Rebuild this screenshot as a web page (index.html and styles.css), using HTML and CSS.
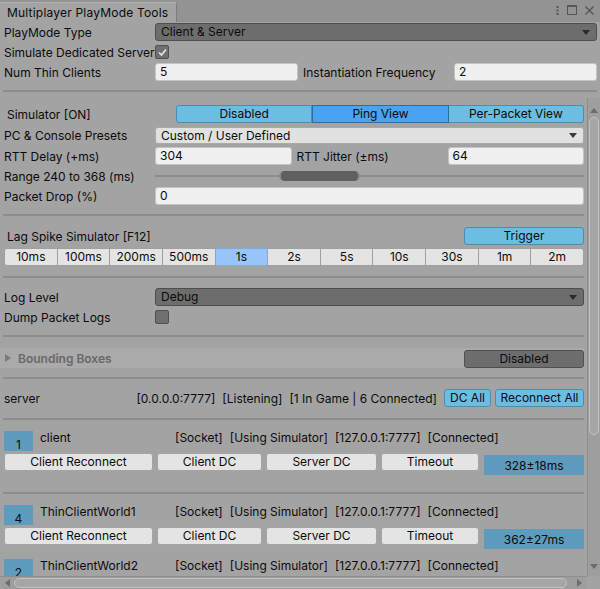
FILE: index.html
```html
<!DOCTYPE html>
<html>
<head>
<meta charset="utf-8">
<link rel="stylesheet" href="styles.css">
</head>
<body>
<div class="window">
  <div class="tabbar">
    <div class="tab">Multiplayer PlayMode Tools</div>
    <div class="tabicons">
      <svg width="3" height="9" viewBox="0 0 3 9"><rect x="0.5" y="0" width="2" height="2" fill="#555"/><rect x="0.5" y="3.5" width="2" height="2" fill="#555"/><rect x="0.5" y="7" width="2" height="2" fill="#555"/></svg>
      <svg width="10" height="10" viewBox="0 0 10 10"><rect x="0.5" y="0.5" width="9" height="9" fill="none" stroke="#555"/><rect x="0" y="0" width="10" height="2" fill="#555"/></svg>
      <svg width="9" height="9" viewBox="0 0 9 9"><path d="M0.5 0.5 L8.5 8.5 M8.5 0.5 L0.5 8.5" stroke="#555" stroke-width="1.3"/></svg>
    </div>
  </div>

  <div class="top">
    <div class="row">
      <div class="label">PlayMode Type</div>
      <div class="dropdown dark">Client &amp; Server<span class="arrow"></span></div>
    </div>
    <div class="row">
      <div class="label">Simulate Dedicated Server</div>
      <div class="checkbox"><svg width="11" height="11" viewBox="0 0 11 11"><path d="M2 5.5 L4.5 8 L9 2.5" fill="none" stroke="#e8e8e8" stroke-width="1.6"/></svg></div>
    </div>
    <div class="row">
      <div class="label">Num Thin Clients</div>
      <div class="field">5</div>
      <div class="label second">Instantiation Frequency</div>
      <div class="field">2</div>
    </div>
  </div>
  <div class="sep wide"></div>

  <div class="scrollview">
    <div class="content">
      <div class="row">
        <div class="label sim">Simulator [ON]</div>
        <div class="toolbar">
          <div class="tb">Disabled</div>
          <div class="tb on">Ping View</div>
          <div class="tb">Per-Packet View</div>
        </div>
      </div>
      <div class="row r3">
        <div class="label">PC &amp; Console Presets</div>
        <div class="dropdown light">Custom / User Defined<span class="arrow"></span></div>
      </div>
      <div class="row r3">
        <div class="label">RTT Delay (+ms)</div>
        <div class="field">304</div>
        <div class="label second">RTT Jitter (±ms)</div>
        <div class="field">64</div>
      </div>
      <div class="row r2">
        <div class="label">Range 240 to 368 (ms)</div>
        <div class="slider">
          <div class="track"></div>
          <div class="range" style="left:124px;width:81px"></div>
        </div>
      </div>
      <div class="row r2">
        <div class="label">Packet Drop (%)</div>
        <div class="field">0</div>
      </div>
      <div class="sep s1"></div>

      <div class="row lag">
        <div class="label sim">Lag Spike Simulator [F12]</div>
        <div class="btn blue trigger">Trigger</div>
      </div>
      <div class="segs">
        <div class="seg">10ms</div>
        <div class="seg">100ms</div>
        <div class="seg">200ms</div>
        <div class="seg">500ms</div>
        <div class="seg sel">1s</div>
        <div class="seg">2s</div>
        <div class="seg">5s</div>
        <div class="seg">10s</div>
        <div class="seg">30s</div>
        <div class="seg">1m</div>
        <div class="seg">2m</div>
      </div>
      <div class="sep s2"></div>

      <div class="row loglevel">
        <div class="label">Log Level</div>
        <div class="dropdown dark">Debug<span class="arrow"></span></div>
      </div>
      <div class="row r2">
        <div class="label">Dump Packet Logs</div>
        <div class="checkbox"></div>
      </div>
      <div class="sep s3"></div>

      <div class="foldout">
        <span class="tri"></span>
        <span class="fold-title">Bounding Boxes</span>
        <div class="btn darkbtn">Disabled</div>
      </div>
      <div class="sep s4"></div>

      <div class="row server">
        <div class="srv-name">server</div>
        <div class="srv-info">
          <span>[0.0.0.0:7777]</span>
          <span>[Listening]</span>
          <span>[1 In Game | 6 Connected]</span>
        </div>
        <div class="btn blue dcall">DC All</div>
        <div class="btn blue reall">Reconnect All</div>
      </div>
      <div class="sep s5"></div>

      <div class="client c1">
        <div class="chead">
          <div class="idx">1</div>
          <div class="cname">client</div>
          <div class="cinfo"><span>[Socket]</span><span>[Using Simulator]</span><span>[127.0.0.1:7777]</span><span>[Connected]</span></div>
        </div>
        <div class="cbtns">
          <div class="btn cb1">Client Reconnect</div>
          <div class="btn cb2">Client DC</div>
          <div class="btn cb3">Server DC</div>
          <div class="btn cb4">Timeout</div>
          <div class="ping">328±18ms</div>
        </div>
      </div>
      <div class="sep s6"></div>

      <div class="client c2">
        <div class="chead">
          <div class="idx">4</div>
          <div class="cname">ThinClientWorld1</div>
          <div class="cinfo"><span>[Socket]</span><span>[Using Simulator]</span><span>[127.0.0.1:7777]</span><span>[Connected]</span></div>
        </div>
        <div class="cbtns">
          <div class="btn cb1">Client Reconnect</div>
          <div class="btn cb2">Client DC</div>
          <div class="btn cb3">Server DC</div>
          <div class="btn cb4">Timeout</div>
          <div class="ping">362±27ms</div>
        </div>
      </div>

      <div class="client c3">
        <div class="chead">
          <div class="idx">2</div>
          <div class="cname">ThinClientWorld2</div>
          <div class="cinfo"><span>[Socket]</span><span>[Using Simulator]</span><span>[127.0.0.1:7777]</span><span>[Connected]</span></div>
        </div>
      </div>
    </div>

    <div class="vscroll">
      <div class="varrow up"></div>
      <div class="vthumb"></div>
      <div class="varrow down"></div>
    </div>
    <div class="hscroll">
      <div class="harrow left"></div>
      <div class="hthumb"></div>
      <div class="harrow right"></div>
    </div>
    <div class="corner"></div>
  </div>
</div>
</body>
</html>
```
FILE: styles.css
```css
* { box-sizing: border-box; }
html, body { margin: 0; padding: 0; }
body {
  width: 600px;
  height: 589px;
  overflow: hidden;
  background: #a3a3a3;
  font-family: Inter, "Noto Sans", sans-serif;
  font-size: 12px;
  color: #0b0b0b;
}
.window { display: flex; flex-direction: column; height: 589px; }

.tabbar {
  height: 22px;
  flex: none;
  background: #939393;
  display: flex;
  align-items: flex-end;
}
.tab {
  width: 177px;
  height: 20px;
  background: #a3a3a3;
  border-top: 1px solid #b0b0b0;
  border-right: 1px solid #7c7c7c;
  border-top-right-radius: 2px;
  padding-left: 7px;
  line-height: 20px;
  white-space: nowrap;
  letter-spacing: 0.2px;
}
.tabicons {
  margin-left: auto;
  align-self: flex-start;
  margin-top: 5px;
  margin-right: 6px;
  display: flex;
  align-items: center;
  gap: 8px;
}
.tabicons svg { display: block; }

.top { padding: 1px 3px 0 4px; flex: none; }
.row { display: flex; align-items: center; height: 18px; margin-bottom: 2px; }
.label { width: 151px; flex: none; white-space: nowrap; }
.label.second { margin-left: 5px; }
.label.sim { width: 172px; padding-left: 3px; }

.dropdown {
  flex: 1;
  height: 18px;
  border-radius: 3px;
  padding-left: 5px;
  line-height: 16px;
  position: relative;
}
.dropdown.dark { background: #6d6d6d; border: 1px solid #4e4e4e; }
.dropdown.light { background: #e1e1e1; border: 1px solid #a9a9a9; height: 17px; line-height: 15px; }
.arrow {
  position: absolute;
  right: 6px;
  top: 6px;
  width: 0; height: 0;
  border-left: 4px solid transparent;
  border-right: 4px solid transparent;
  border-top: 5px solid #2a2a2a;
}
.dropdown.light .arrow { top: 5px; border-top-color: #3a3a3a; }

.checkbox {
  width: 14px; height: 14px;
  background: #6f6f6f;
  border: 1px solid #505050;
  border-radius: 2px;
  display: flex; align-items: center; justify-content: center;
}
.checkbox svg { display: block; }

.field {
  flex: 1;
  height: 18px;
  background: #f0f0f0;
  border: 1px solid #c4c4c4;
  border-radius: 3px;
  padding-left: 4px;
  line-height: 16px;
}

.sep { height: 2px; background: #8d8d8d; flex: none; }
.sep.wide { margin: 7px 3px 0 3px; }

.scrollview {
  flex: 1;
  display: grid;
  grid-template-columns: 1fr 13px;
  grid-template-rows: 1fr 13px;
  margin-top: 6px;
  min-height: 0;
}
.content {
  overflow: hidden;
  padding: 7px 3px 0 4px;
  min-height: 0;
}
.content .sep { margin-left: -1px; }
.r3 { margin-top: 3px; margin-bottom: 0; }
.r2 { margin-top: 2px; margin-bottom: 0; }

.toolbar { flex: 1; display: flex; height: 18px; }
.tb {
  flex: 1;
  background: #6cbde2;
  border: 1px solid #4b8db0;
  text-align: center;
  line-height: 16px;
}
.tb + .tb { border-left: none; }
.tb:first-child { border-radius: 3px 0 0 3px; }
.tb:last-child { border-radius: 0 3px 3px 0; }
.tb.on { background: #4aa3f1; border-color: #2e6c9c; border-left: 1px solid #2e6c9c; }
.tb.on + .tb { border-left: none; }

.slider { flex: 1; height: 18px; position: relative; }
.track { position: absolute; left: 0; right: 0; top: 8px; height: 2px; background: #8c8c8c; }
.range {
  position: absolute;
  top: 4px;
  height: 10px;
  background: #5f5f5f;
  border-radius: 5px;
  border-left: 2px solid #8a8a8a;
  border-right: 2px solid #8a8a8a;
}

.s1 { margin-top: 9px; }
.lag { margin-top: 11px; margin-bottom: 0; justify-content: space-between; }
.btn {
  height: 18px;
  background: #e4e4e4;
  border: 1px solid #a4a4a4;
  border-radius: 3px;
  text-align: center;
  line-height: 16px;
  white-space: nowrap;
  flex: none;
}
.btn.blue { background: #6cbde2; border-color: #4b8db0; }
.trigger { width: 120px; }

.segs { display: flex; margin-top: 3px; height: 18px; }
.seg {
  flex: 1;
  background: #e4e4e4;
  border: 1px solid #a0a0a0;
  border-left: none;
  text-align: center;
  line-height: 16px;
}
.seg:first-child { border-left: 1px solid #a0a0a0; border-radius: 3px 0 0 3px; }
.seg:last-child { border-radius: 0 3px 3px 0; }
.seg.sel { background: #97c4fa; border-color: #8aa8cc; }

.s2 { margin-top: 10px; }
.loglevel { margin-top: 10px; margin-bottom: 0; }
.s3 { margin-top: 9px; }

.foldout {
  margin: 11px 0 0 -4px;
  height: 20px;
  background: #aaaaaa;
  display: flex;
  align-items: center;
  padding-left: 5px;
}
.tri {
  width: 0; height: 0;
  border-top: 4px solid transparent;
  border-bottom: 4px solid transparent;
  border-left: 6px solid #7a7a7a;
  margin-right: 7px;
}
.fold-title { color: #686868; font-weight: 600; }
.darkbtn { margin-left: auto; width: 120px; background: #6d6d6d; border-color: #4f4f4f; height: 18px; margin-top: 2px; }

.s4 { margin-top: 9px; }
.server { margin-top: 10px; margin-bottom: 0; }
.srv-name { flex: 1; }
.srv-info { display: flex; gap: 7px; margin-right: 7px; }
.dcall { width: 47px; }
.reall { width: 89px; margin-left: 4px; }
.s5 { margin-top: 11px; }

.c1 { margin-top: 11px; }
.c2 { margin-top: 11px; }
.c3 { margin-top: 10px; }
.chead { display: flex; height: 20px; }
.idx {
  width: 29px; height: 20px;
  background: #5f9bbc;
  text-align: center;
  padding-top: 4px;
  line-height: 20px;
  flex: none;
}
.cname { width: 135px; margin-left: 7px; line-height: 13px; flex: none; }
.cinfo { display: flex; gap: 7px; line-height: 13px; }
.cbtns { display: flex; margin-top: 2px; align-items: flex-start; }
.cb1 { width: 149px; }
.cb2 { width: 105px; margin-left: 4px; }
.cb3 { width: 111px; margin-left: 4px; }
.cb4 { width: 98px; margin-left: 4px; }
.ping {
  width: 100px;
  height: 20px;
  margin-left: 5px;
  margin-top: 2px;
  background: #5f9bbc;
  text-align: center;
  line-height: 22px;
}
.s6 { margin-top: 17px; }

.vscroll {
  grid-column: 2; grid-row: 1;
  background: #9e9e9e;
  border-left: 1px solid #8e8e8e;
  position: relative;
  display: flex; flex-direction: column; align-items: center;
}
.varrow { width: 0; height: 0; border-left: 4px solid transparent; border-right: 4px solid transparent; }
.varrow.up { border-bottom: 5px solid #6c6c6c; margin-top: 10px; }
.varrow.down { border-top: 5px solid #6c6c6c; margin-top: auto; margin-bottom: 7px; }
.vthumb {
  width: 10px;
  height: 318px;
  margin-top: 4px;
  border: 1px solid #c2c2c2;
  background: #a6a6a6;
  border-radius: 5px;
}
.hscroll {
  grid-column: 1; grid-row: 2;
  background: #9e9e9e;
  border-top: 1px solid #8e8e8e;
  display: flex; align-items: center;
}
.harrow { width: 0; height: 0; border-top: 4px solid transparent; border-bottom: 4px solid transparent; }
.harrow.left { border-right: 5px solid #6c6c6c; margin-left: 5px; }
.harrow.right { border-left: 5px solid #6c6c6c; margin-left: auto; margin-right: 5px; }
.hthumb {
  width: 553px;
  height: 10px;
  margin-left: 4px;
  border: 1px solid #c2c2c2;
  background: #a6a6a6;
  border-radius: 5px;
}
.corner { grid-column: 2; grid-row: 2; background: #a3a3a3; }
```
